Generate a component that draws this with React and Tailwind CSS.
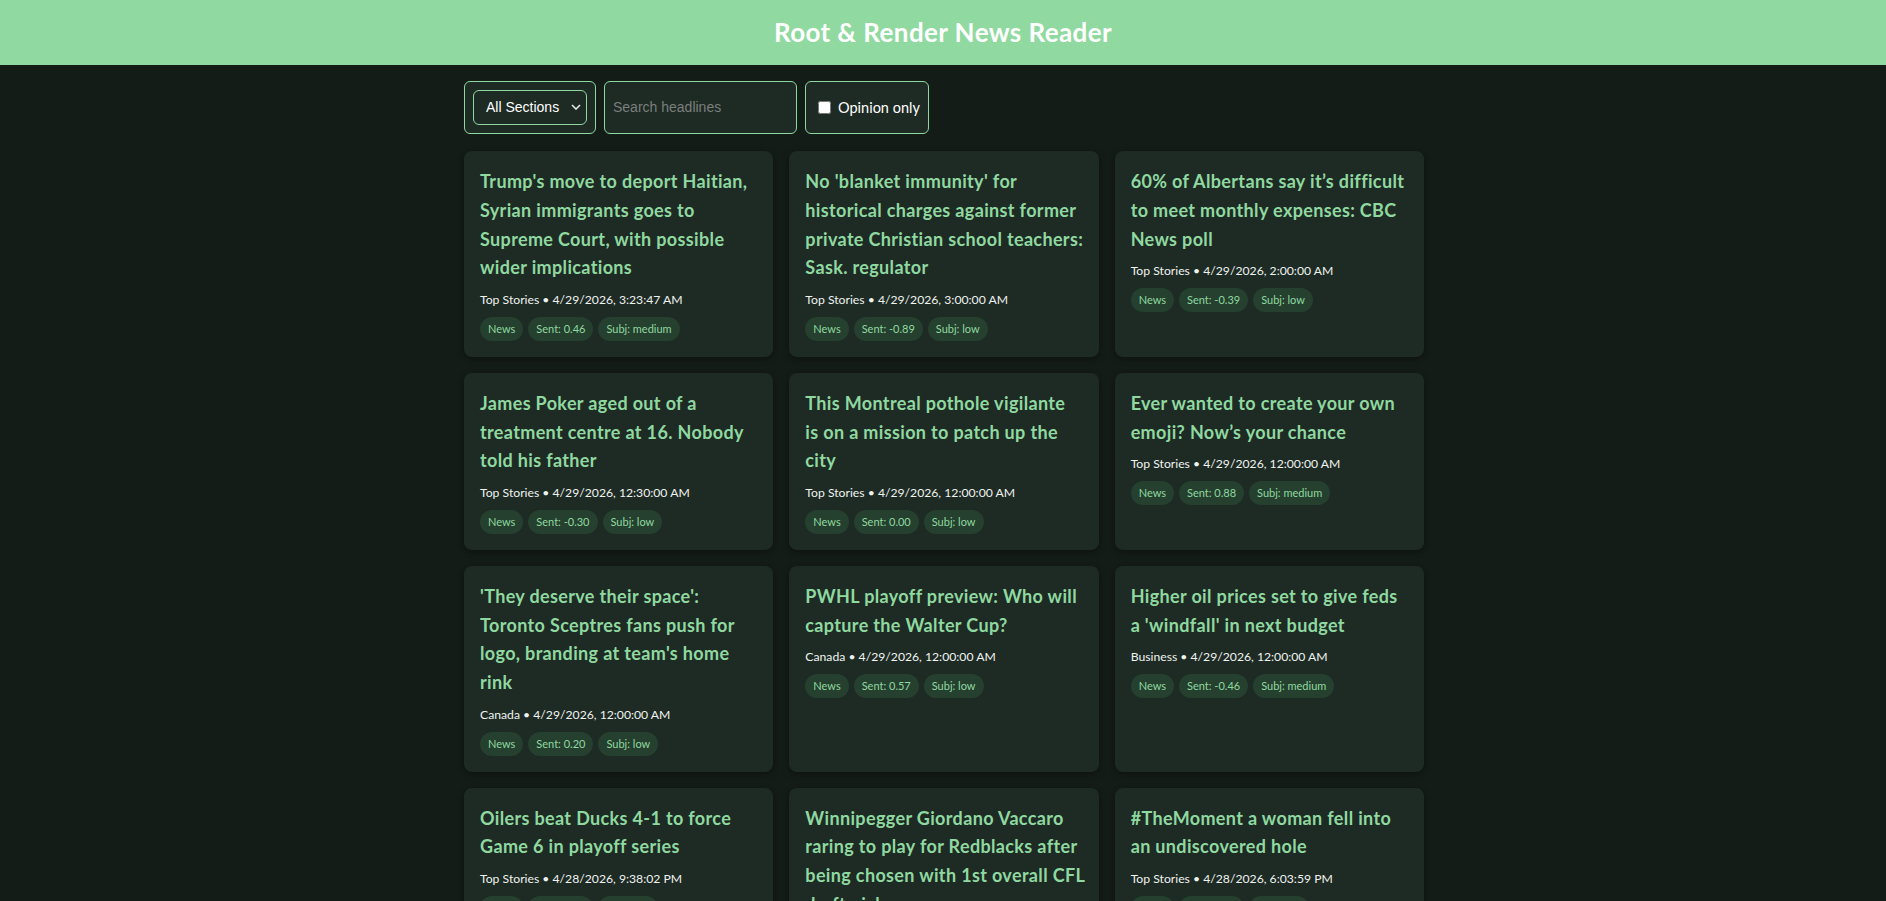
import React, { useState } from "react";

// titles are split where the original layout wraps them
const stories = [
  {
    lines: ["Trump's move to deport Haitian,", "Syrian immigrants goes to", "Supreme Court, with possible", "wider implications"],
    section: "Top Stories",
    date: "4/29/2026, 3:23:47 AM",
    sent: "0.46",
    subj: "medium",
  },
  {
    lines: ["No 'blanket immunity' for", "historical charges against former", "private Christian school teachers:", "Sask. regulator"],
    section: "Top Stories",
    date: "4/29/2026, 3:00:00 AM",
    sent: "-0.89",
    subj: "low",
  },
  {
    lines: ["60% of Albertans say it’s difficult", "to meet monthly expenses: CBC", "News poll"],
    section: "Top Stories",
    date: "4/29/2026, 2:00:00 AM",
    sent: "-0.39",
    subj: "low",
  },
  {
    lines: ["James Poker aged out of a", "treatment centre at 16. Nobody", "told his father"],
    section: "Top Stories",
    date: "4/29/2026, 12:30:00 AM",
    sent: "-0.30",
    subj: "low",
  },
  {
    lines: ["This Montreal pothole vigilante", "is on a mission to patch up the", "city"],
    section: "Top Stories",
    date: "4/29/2026, 12:00:00 AM",
    sent: "0.00",
    subj: "low",
  },
  {
    lines: ["Ever wanted to create your own", "emoji? Now’s your chance"],
    section: "Top Stories",
    date: "4/29/2026, 12:00:00 AM",
    sent: "0.88",
    subj: "medium",
  },
  {
    lines: ["'They deserve their space':", "Toronto Sceptres fans push for", "logo, branding at team's home", "rink"],
    section: "Canada",
    date: "4/29/2026, 12:00:00 AM",
    sent: "0.20",
    subj: "low",
  },
  {
    lines: ["PWHL playoff preview: Who will", "capture the Walter Cup?"],
    section: "Canada",
    date: "4/29/2026, 12:00:00 AM",
    sent: "0.57",
    subj: "low",
  },
  {
    lines: ["Higher oil prices set to give feds", "a 'windfall' in next budget"],
    section: "Business",
    date: "4/29/2026, 12:00:00 AM",
    sent: "-0.46",
    subj: "medium",
  },
  {
    lines: ["Oilers beat Ducks 4-1 to force", "Game 6 in playoff series"],
    section: "Top Stories",
    date: "4/28/2026, 9:38:02 PM",
    sent: "0.10",
    subj: "low",
  },
  {
    lines: ["Winnipegger Giordano Vaccaro", "raring to play for Redblacks after", "being chosen with 1st overall CFL", "draft pick"],
    section: "Sports",
    date: "4/28/2026, 8:15:00 PM",
    sent: "0.52",
    subj: "medium",
  },
  {
    lines: ["#TheMoment a woman fell into", "an undiscovered hole"],
    section: "Top Stories",
    date: "4/28/2026, 6:03:59 PM",
    sent: "0.05",
    subj: "low",
  },
];

function Pill({ children }) {
  return (
    <span className="rounded-full bg-[#25402e] px-2 py-[3px] text-[11px] leading-[1.6] text-[#8fd9a0]">
      {children}
    </span>
  );
}

function StoryCard({ story }) {
  return (
    <article className="rounded-lg bg-[#1e2a24] p-4 shadow-[0_2px_6px_rgba(0,0,0,0.35)]">
      <h2 className="mb-[7px] whitespace-nowrap text-[18px] font-bold leading-[1.6] tracking-[0.35px] text-[#8fd9a0]">
        {story.lines.map((line, i) => (
          <React.Fragment key={i}>
            {i > 0 && <br />}
            {line}
          </React.Fragment>
        ))}
      </h2>
      <div className="mb-[7px] text-[12.2px] leading-[21px] text-[#eef3ef]">
        {story.section} • {story.date}
      </div>
      <div className="flex flex-wrap gap-[5px]">
        <Pill>News</Pill>
        <Pill>Sent: {story.sent}</Pill>
        <Pill>Subj: {story.subj}</Pill>
      </div>
    </article>
  );
}

export default function App() {
  const [section, setSection] = useState("all");
  const [query, setQuery] = useState("");
  const [opinion, setOpinion] = useState(false);

  return (
    <div className="min-h-screen bg-[#141c17] font-['Segoe_UI','Lato',sans-serif] text-white">
      <header className="flex h-[65px] items-center justify-center bg-[#90d9a0]">
        <h1 className="text-[26px] font-bold tracking-[0.4px] text-white">Root &amp; Render News Reader</h1>
      </header>

      <main className="mx-auto max-w-[962px] pl-[2px] pt-4">
        <div className="mb-[17px] flex items-stretch gap-2">
          <div className="rounded-md border border-[#8fd9a0] bg-[#1e2a24] p-2">
            <div className="relative">
              <select
                value={section}
                onChange={(e) => setSection(e.target.value)}
                className="h-[35px] w-[114px] appearance-none rounded-md border border-[#8fd9a0] bg-[#1e2a24] pl-[12px] pr-6 font-['Liberation_Sans',Arial,sans-serif] text-[14px] text-white outline-none"
              >
                <option value="all">All Sections</option>
                <option value="top">Top Stories</option>
                <option value="canada">Canada</option>
                <option value="business">Business</option>
              </select>
              <svg
                className="pointer-events-none absolute right-[6px] top-[14px]"
                width="10"
                height="6"
                viewBox="0 0 10 6"
                fill="none"
                stroke="#e5e5e5"
                strokeWidth="1.6"
              >
                <path d="M1 1l4 4 4-4" />
              </svg>
            </div>
          </div>

          <input
            type="text"
            value={query}
            onChange={(e) => setQuery(e.target.value)}
            placeholder="Search headlines"
            className="w-[193px] rounded-md border border-[#8fd9a0] bg-[#1e2a24] px-2 font-['Liberation_Sans',Arial,sans-serif] text-[14px] text-white outline-none placeholder:text-[#7a7f7c]"
          />

          <label className="flex items-center rounded-md border border-[#8fd9a0] bg-[#1e2a24] pl-[12px] pr-2 text-[14.5px] text-white">
            <input
              type="checkbox"
              checked={opinion}
              onChange={(e) => setOpinion(e.target.checked)}
              className="mr-[7px] h-[13px] w-[13px]"
            />
            Opinion only
          </label>
        </div>

        <div className="grid grid-cols-3 gap-4 pb-8">
          {stories.map((s, i) => (
            <StoryCard key={i} story={s} />
          ))}
        </div>
      </main>
    </div>
  );
}
